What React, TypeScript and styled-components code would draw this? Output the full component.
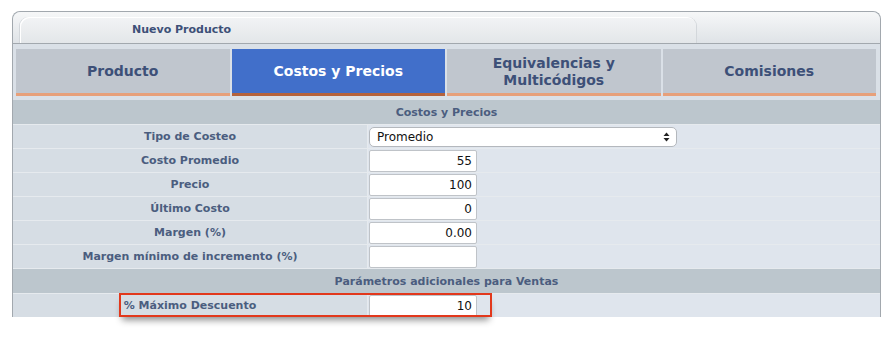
import React from "react";
import styled, { createGlobalStyle } from "styled-components";

const GlobalStyle = createGlobalStyle`
  html, body {
    margin: 0;
    padding: 0;
    background: #ffffff;
  }
  body {
    font-family: "DejaVu Sans", Verdana, sans-serif;
  }
`;

const Page = styled.div`
  min-height: 340px;
  box-sizing: border-box;
  padding: 11px 13px 24px 12px;
`;

const Frame = styled.div`
  border: 1px solid #a2a8ae;
  border-bottom: none;
  border-radius: 8px 8px 0 0;
  background: #e7ebef;
`;

const TitleBar = styled.div`
  height: 32px;
  padding: 6px 0 0 7px;
  box-sizing: border-box;
  background: linear-gradient(#f6f7f8, #dfe3e7);
  border-bottom: 1px solid #a2a8ae;
  border-radius: 8px 8px 0 0;
  display: flex;
  align-items: flex-end;
`;

const TitleTab = styled.div`
  width: 676px;
  height: 26px;
  box-sizing: border-box;
  padding: 6px 0 0 112px;
  border-radius: 9px 9px 0 0;
  background: linear-gradient(#f2f3f5, #e3e6e9);
  box-shadow: inset 1px 1px 0 #ffffff, -1px 0 0 #d3d7db, 1px 0 0 #d3d7db;
  font-size: 11px;
  font-weight: bold;
  color: #3d5078;
`;

const TabRow = styled.div`
  display: grid;
  grid-template-columns: repeat(4, 1fr);
  gap: 2px;
  padding: 5px 4px 4px 3px;
  background: #dae0e7;
`;

const Tab = styled.div<{ $active?: boolean }>`
  height: 47px;
  box-sizing: border-box;
  display: flex;
  align-items: center;
  justify-content: center;
  text-align: center;
  padding-top: 1px;
  font-size: 14px;
  font-weight: bold;
  line-height: 17px;
  color: ${(p) => (p.$active ? "#ffffff" : "#3d5078")};
  background: ${(p) => (p.$active ? "#416fca" : "#c0c6ce")};
  border-bottom: 3px solid ${(p) => (p.$active ? "#b4623c" : "#e7a07a")};
`;

const TabLabel = styled.span`
  white-space: pre-line;
`;

const Grid = styled.div`
  display: grid;
  grid-template-columns: 354px 1fr;
  gap: 1px 1px;
  background: #e6eaee;
`;

const SectionHeader = styled.div`
  grid-column: 1 / -1;
  height: 24px;
  display: flex;
  align-items: center;
  justify-content: center;
  background: #bcc6cd;
  font-size: 11px;
  font-weight: bold;
  color: #4b5d7f;
`;

const LabelCell = styled.div`
  height: 23px;
  display: flex;
  align-items: center;
  justify-content: center;
  background: #d6dde4;
  font-size: 11px;
  font-weight: bold;
  color: #4b5d7f;
`;

const ValueCell = styled.div`
  position: relative;
  height: 23px;
  display: flex;
  align-items: center;
  background: #dfe5ed;
  padding-left: 1px;
`;

const TextBox = styled.div`
  width: 108px;
  height: 22px;
  box-sizing: border-box;
  background: #ffffff;
  border: 1px solid #bfc3c8;
  border-radius: 2px;
  font-size: 12px;
  color: #111111;
  display: flex;
  align-items: center;
  justify-content: flex-end;
  padding-right: 4px;
`;

const SelectBox = styled.div`
  width: 308px;
  height: 20px;
  box-sizing: border-box;
  background: #ffffff;
  border: 1px solid #b4b8bd;
  border-radius: 5px;
  font-size: 12px;
  color: #111111;
  display: flex;
  align-items: center;
  justify-content: space-between;
  padding: 0 6px 0 7px;
`;

const Callout = styled.div`
  position: absolute;
  left: -249px;
  top: -1px;
  width: 373px;
  height: 24px;
  box-sizing: border-box;
  border: 2px solid #e2381c;
  box-shadow: 0 6px 7px -3px rgba(0, 0, 0, 0.45);
  pointer-events: none;
`;

const Arrows = () => (
  <svg width="7" height="10" viewBox="0 0 7 10">
    <path d="M3.5 0.5 L6.5 4 H0.5 Z" fill="#222" />
    <path d="M3.5 9.5 L6.5 6 H0.5 Z" fill="#222" />
  </svg>
);

const tabs = [
  { label: "Producto" },
  { label: "Costos y Precios", active: true },
  { label: "Equivalencias y\nMulticódigos" },
  { label: "Comisiones" },
];

const fields: { label: string; value: string }[] = [
  { label: "Costo Promedio", value: "55" },
  { label: "Precio", value: "100" },
  { label: "Último Costo", value: "0" },
  { label: "Margen (%)", value: "0.00" },
  { label: "Margen mínimo de incremento (%)", value: "" },
];

export default function App() {
  return (
    <Page>
      <GlobalStyle />
      <Frame>
        <TitleBar>
          <TitleTab>Nuevo Producto</TitleTab>
        </TitleBar>
        <TabRow>
          {tabs.map((t) => (
            <Tab key={t.label} $active={t.active}>
              <TabLabel>{t.label}</TabLabel>
            </Tab>
          ))}
        </TabRow>
        <Grid>
          <SectionHeader>Costos y Precios</SectionHeader>
          <LabelCell>Tipo de Costeo</LabelCell>
          <ValueCell>
            <SelectBox>
              <span>Promedio</span>
              <Arrows />
            </SelectBox>
          </ValueCell>
          {fields.map((f) => (
            <React.Fragment key={f.label}>
              <LabelCell>{f.label}</LabelCell>
              <ValueCell>
                <TextBox>{f.value}</TextBox>
              </ValueCell>
            </React.Fragment>
          ))}
          <SectionHeader>Parámetros adicionales para Ventas</SectionHeader>
          <LabelCell>% Máximo Descuento</LabelCell>
          <ValueCell>
            <TextBox>10</TextBox>
            <Callout />
          </ValueCell>
        </Grid>
      </Frame>
    </Page>
  );
}
